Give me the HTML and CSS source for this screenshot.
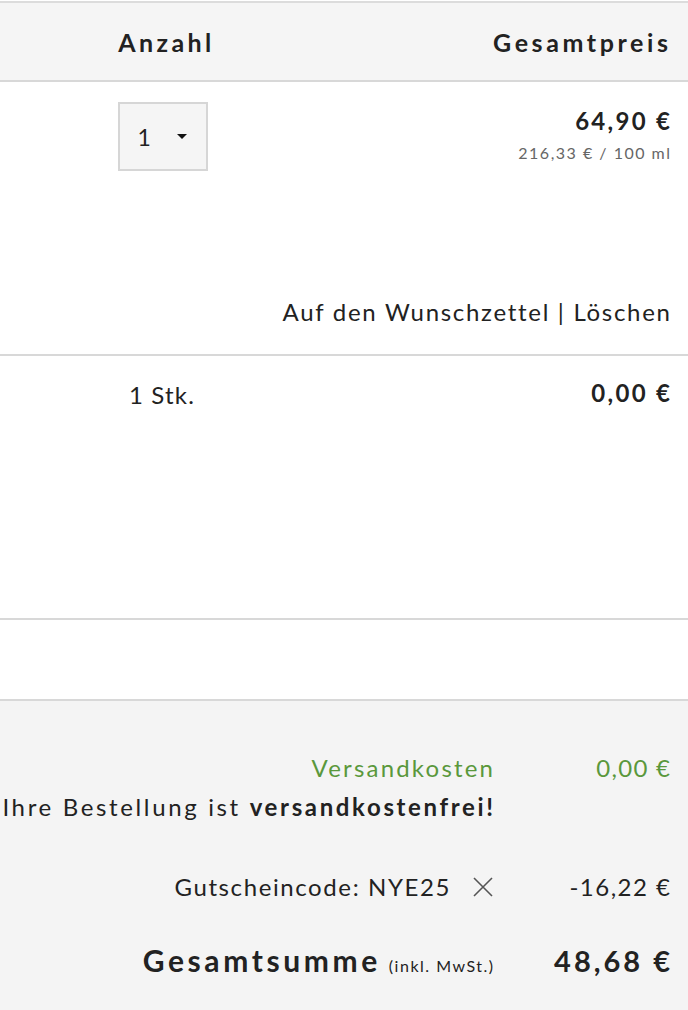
FILE: index.html
```html
<!DOCTYPE html>
<html lang="de">
<head>
<meta charset="utf-8">
<link rel="stylesheet" href="styles.css">
</head>
<body>
<div class="cart">
  <div class="head row">
    <div class="col-qty">Anzahl</div>
    <div class="col-price">Gesamtpreis</div>
  </div>
  <div class="item row">
    <div class="col-qty">
      <div class="select"><span>1</span><span class="caret"></span></div>
    </div>
    <div class="col-price">
      <div class="price">64,90 €</div>
      <div class="unit">216,33 € / 100 ml</div>
    </div>
    <div class="actions">Auf den Wunschzettel | Löschen</div>
  </div>
  <div class="gift row">
    <div class="col-qty"><div class="stk">1 Stk.</div></div>
    <div class="col-price"><div class="price">0,00 €</div></div>
  </div>
  <div class="empty"></div>
  <div class="summary">
    <div class="sum-line green">
      <div class="label">Versandkosten</div>
      <div class="value">0,00 €</div>
    </div>
    <div class="free"><span class="free-text">Ihre Bestellung ist <b>versandkostenfrei!</b></span></div>
    <div class="sum-line coupon">
      <div class="label">Gutscheincode: NYE25
        <svg class="x" width="20" height="20" viewBox="0 0 20 20"><path d="M1 1L19 19M19 1L1 19" stroke="#555" stroke-width="1.6" fill="none"/></svg>
      </div>
      <div class="value">-16,22 €</div>
    </div>
    <div class="sum-line total">
      <div class="label"><span class="big">Gesamtsumme</span> <span class="small">(inkl. MwSt.)</span></div>
      <div class="value">48,68 €</div>
    </div>
  </div>
</div>
</body>
</html>
```

FILE: styles.css
```css
html, body {
  margin: 0;
  padding: 0;
  background: #fff;
}
body {
  font-family: "Lato", "DejaVu Sans", sans-serif;
  color: #222;
  overflow: hidden;
  height: 1010px;
}
.cart {
  padding-top: 1px;
}
.row {
  display: grid;
  grid-template-columns: 110px 110px 1fr;
  padding-right: 18px;
}
.col-qty {
  grid-column: 2;
  display: flex;
  justify-content: center;
}
.col-price {
  grid-column: 3;
  text-align: right;
}
.head {
  background: #f5f5f5;
  border-top: 2px solid #dcdcdc;
  border-bottom: 2px solid #d8d8d8;
  height: 77px;
  align-items: center;
  font-weight: 700;
  font-size: 25px;
  letter-spacing: 3.4px;
}
.head .col-qty {
  margin-left: 3px;
}
.head .col-price {
  letter-spacing: 3.6px;
  margin-right: -1.6px;
}
.item {
  height: 252px;
  padding-top: 20px;
  border-bottom: 2px solid #d8d8d8;
  grid-template-rows: 195px auto;
}
.select {
  width: 90px;
  height: 69px;
  box-sizing: border-box;
  border: 2px solid #d6d6d6;
  background: #f5f5f5;
  display: flex;
  align-items: center;
  padding-left: 18px;
  gap: 26px;
  font-size: 23px;
  margin-left: -5px;
}
.caret {
  width: 0;
  height: 0;
  border-left: 5px solid transparent;
  border-right: 5px solid transparent;
  border-top: 5px solid #111;
}
.price {
  font-weight: 700;
  font-size: 24px;
  letter-spacing: 2.3px;
  margin-right: -2.3px;
  margin-top: 4px;
}
.unit {
  font-size: 16px;
  letter-spacing: 1.5px;
  margin-right: -1.5px;
  color: #666;
  margin-top: 8px;
}
.actions {
  grid-column: 1 / 4;
  grid-row: 2;
  text-align: right;
  font-size: 24px;
  letter-spacing: 1.7px;
  margin-right: -1.7px;
}
.gift {
  height: 240px;
  padding-top: 22px;
  border-bottom: 2px solid #d8d8d8;
  align-items: start;
}
.stk {
  font-size: 24px;
  letter-spacing: 1.2px;
  margin-left: -6px;
  margin-top: 2px;
}
.gift .price {
  margin-top: 0;
}
.empty {
  height: 79px;
  border-bottom: 2px solid #d8d8d8;
}
.summary {
  background: #f4f4f4;
  padding: 52px 18px 40px 0;
  height: 400px;
}
.sum-line {
  display: grid;
  grid-template-columns: 1fr 177px;
  align-items: baseline;
}
.label {
  text-align: right;
  display: flex;
  justify-content: flex-end;
  align-items: center;
  gap: 22px;
}
.value {
  text-align: right;
}
.green {
  color: #5a983c;
  font-size: 24px;
}
.green .label {
  letter-spacing: 2.2px;
  margin-right: -2.2px;
}
.green .value {
  letter-spacing: 1.3px;
  margin-right: -1.3px;
}
.free {
  width: 493px;
  display: flex;
  justify-content: flex-end;
  font-size: 24px;
  letter-spacing: 2.65px;
  white-space: nowrap;
  margin-top: 10px;
}
.free-text {
  flex: none;
  margin-right: -2.65px;
}
.coupon {
  margin-top: 51px;
  font-size: 24px;
}
.coupon .label {
  letter-spacing: 1.6px;
}
.coupon .value {
  letter-spacing: 1.5px;
  margin-right: -1.5px;
}
.total {
  margin-top: 41px;
}
.total .label {
  align-items: baseline;
  gap: 8px;
}
.big {
  font-weight: 700;
  font-size: 30px;
  letter-spacing: 3.6px;
}
.small {
  font-size: 16px;
  letter-spacing: 1.5px;
  margin-right: -1.5px;
}
.total .value {
  font-weight: 700;
  font-size: 29px;
  letter-spacing: 3px;
  margin-right: -3px;
}
```
